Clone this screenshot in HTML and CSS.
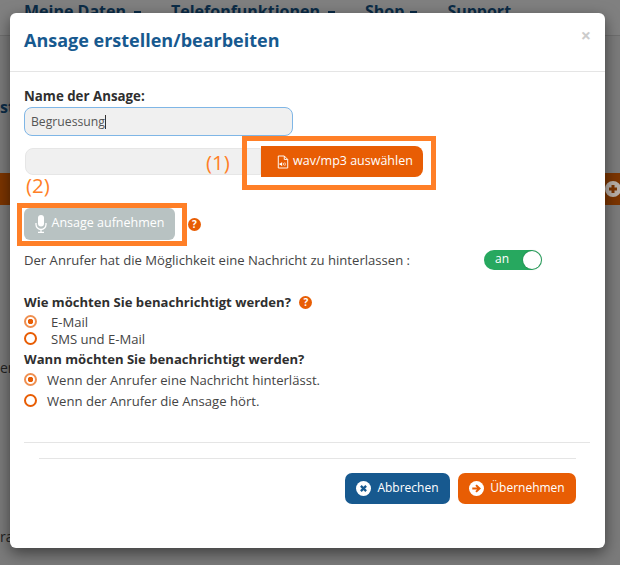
FILE: index.html
```html
<!DOCTYPE html>
<html lang="de">
<head>
    <meta charset="UTF-8">
    <meta name="viewport" content="width=device-width, initial-scale=1.0">
    <title>Ansage erstellen/bearbeiten</title>
    <link rel="stylesheet" href="styles.css">
</head>
<body>

<!-- Seite hinter dem Dialog -->
<nav class="topnav">
    <span class="nav-item drop">Meine Daten</span>
    <span class="nav-item drop">Telefonfunktionen</span>
    <span class="nav-item drop near">Shop</span>
    <span class="nav-item">Support</span>
</nav>
<span class="behind behind-st">st</span>
<span class="behind behind-en">en</span>
<span class="behind behind-ra">ra</span>
<div class="behind-bar behind-bar-left"></div>
<div class="behind-bar behind-bar-right">
    <svg class="behind-plus" viewBox="0 0 16 16"><circle cx="8" cy="8" r="8" fill="#b9b0a8"/><path d="M8 4v8M4 8h8" stroke="#7c3500" stroke-width="3"/></svg>
</div>

<div class="modal">
    <div class="modal-header">
        <h1>Ansage erstellen/bearbeiten</h1>
        <span class="close">×</span>
    </div>

    <div class="modal-body">
        <label class="field-label">Name der Ansage:</label>
        <div class="text-input">Begruessung<span class="caret"></span></div>

        <div class="file-row">
            <div class="file-path"></div>
            <button class="btn btn-file">
                <svg class="file-icon" viewBox="0 0 14 16">
                    <path d="M1.5 1h7l4 4v10h-11z" fill="none" stroke="#fff" stroke-width="1.1"/>
                    <path d="M8.5 1v4h4" fill="none" stroke="#fff" stroke-width="1.1"/>
                    <path d="M3 9.5h1.3l1.7-1.5v5l-1.7-1.5H3z" fill="#fff"/>
                    <path d="M7.3 9.3q.9 1.2 0 2.4M9 8.5q1.6 2 0 4" fill="none" stroke="#fff" stroke-width=".9"/>
                </svg>
                <span>wav/mp3 auswählen</span>
            </button>
        </div>

        <div class="record-row">
            <button class="btn btn-record">
                <svg class="mic-icon" viewBox="0 0 12 18">
                    <rect x="3" y="0" width="6" height="11.5" rx="3" fill="#fff"/>
                    <path d="M1 8v1.5a5 5 0 0 0 10 0V8M6 14.5V17M3 17.3h6" fill="none" stroke="#fff" stroke-width="1.3"/>
                </svg>
                <span>Ansage aufnehmen</span>
            </button>
            <span class="help">?</span>
        </div>

        <div class="toggle-row">
            <span>Der Anrufer hat die Möglichkeit eine Nachricht zu hinterlassen :</span>
            <div class="toggle"><span>an</span><i></i></div>
        </div>

        <div class="group-title first">Wie möchten Sie benachrichtigt werden? <span class="help">?</span></div>
        <div class="radio radio-tight wide"><i class="on"></i>E-Mail</div>
        <div class="radio radio-tight wide"><i></i>SMS und E-Mail</div>

        <div class="group-title second">Wann möchten Sie benachrichtigt werden?</div>
        <div class="radio"><i class="on"></i>Wenn der Anrufer eine Nachricht hinterlässt.</div>
        <div class="radio"><i></i>Wenn der Anrufer die Ansage hört.</div>
    </div>

    <div class="modal-footer">
        <div class="footer-inner">
            <button class="btn btn-blue">
                <svg class="round-icon" viewBox="0 0 16 16"><circle cx="8" cy="8" r="8" fill="#fff"/><path d="M5.2 5.2l5.6 5.6M10.8 5.2l-5.6 5.6" stroke="#17598f" stroke-width="2.4"/></svg>
                <span>Abbrechen</span>
            </button>
            <button class="btn btn-orange">
                <svg class="round-icon" viewBox="0 0 16 16"><circle cx="8" cy="8" r="8" fill="#fff"/><path d="M3.5 8h7M7.5 4.4L11.2 8l-3.7 3.6" fill="none" stroke="#e85d04" stroke-width="2.2"/></svg>
                <span>Übernehmen</span>
            </button>
        </div>
    </div>

    <!-- Markierungen aus dem Screenshot -->
    <div class="mark mark-file"></div>
    <div class="mark mark-record"></div>
    <span class="mark-num mark-num-1">(1)</span>
    <span class="mark-num mark-num-2">(2)</span>
</div>

</body>
</html>
```

FILE: styles.css
```css
* {
    box-sizing: border-box;
}
html, body {
    height: 100%;
}
body {
    font-family: "Open Sans", Arial, sans-serif;
    background-color: #7b7b7b;
    margin: 0;
    overflow: hidden;
    position: relative;
    color: #333;
}

/* page behind the dialog */
.topnav {
    height: 36px;
    background-color: #808080;
    border-bottom: 1px solid #6e6e6e;
    display: flex;
    gap: 30px;
    padding: 0 0 0 24px;
    font-size: 16px;
    font-weight: 700;
    color: #0b2c47;
    white-space: nowrap;
    overflow: hidden;
}
.nav-item.drop::after {
    content: "";
    display: inline-block;
    width: 7px;
    height: 2px;
    margin-left: 8px;
    vertical-align: 4px;
    background-color: #0b2c47;
}
.nav-item.near::after {
    margin-left: 6px;
}
.behind {
    position: absolute;
    font-size: 14px;
    color: #222;
}
.behind-st { left: 0; top: 96px; font-weight: 700; font-size: 16px; color: #0b2c47; }
.behind-en { left: 0; top: 358px; }
.behind-ra { left: 0; top: 527px; }
.behind-bar {
    position: absolute;
    top: 173px;
    height: 32px;
    background-color: #7c3500;
}
.behind-bar-left { left: 0; width: 12px; }
.behind-bar-right { left: 600px; width: 20px; }
.behind-plus {
    position: absolute;
    left: 5px;
    top: 8px;
    width: 16px;
    height: 16px;
}

/* dialog */
.modal {
    position: absolute;
    left: 10px;
    top: 13px;
    width: 595px;
    height: 535px;
    background-color: #fff;
    border-radius: 6px;
    box-shadow: 0 5px 15px rgba(0, 0, 0, 0.5);
}
.modal-header {
    height: 59px;
    border-bottom: 1px solid #e5e5e5;
    padding: 14px 14px 0;
    position: relative;
}
.modal-header h1 {
    margin: 0;
    font-size: 18px;
    line-height: 27px;
    font-weight: 700;
    color: #17598f;
}
.close {
    position: absolute;
    right: 14px;
    top: 10px;
    font-size: 18px;
    font-weight: 700;
    line-height: 24px;
    color: #ccc;
}
.modal-body {
    padding-top: 14px;
    height: 371px;
    border-bottom: 1px solid #e5e5e5;
    margin: 0 15px 0 14px;
    font-size: 13.1px;
}
.field-label {
    display: block;
    font-weight: 700;
    font-size: 13.3px;
    line-height: 20px;
    color: #2f2f2f;
}
.text-input {
    width: 269px;
    height: 29px;
    margin-top: 1px;
    padding-left: 6px;
    font-size: 12.2px;
    line-height: 27px;
    background-color: #f0f0f0;
    border: 1px solid #7fb6e6;
    border-radius: 8px;
    color: #555;
}
.caret {
    display: inline-block;
    width: 1px;
    height: 14px;
    background-color: #333;
    vertical-align: -3px;
}
.file-row {
    display: flex;
    align-items: center;
    margin-top: 10px;
    height: 31px;
}
.file-path {
    width: 236px;
    height: 27px;
    margin-left: 1px;
    background-color: #f0f0f0;
    border: 1px solid #e6e6e6;
    border-radius: 8px 0 0 8px;
}
.btn {
    display: inline-flex;
    align-items: center;
    justify-content: center;
    border: none;
    color: #fff;
    font-family: inherit;
    font-size: 12.5px;
    white-space: nowrap;
    padding: 0;
}
.btn span {
    margin-bottom: 3px;
}
.btn-file {
    width: 162px;
    height: 31px;
    gap: 4px;
    padding-left: 6px;
    background-color: #e85d04;
    border-radius: 0 8px 8px 0;
}
.file-icon {
    width: 12px;
    height: 14px;
}
.record-row {
    display: flex;
    align-items: center;
    gap: 13px;
    margin-top: 31px;
}
.btn-record {
    width: 151px;
    height: 32px;
    gap: 5px;
    background-color: #b8c2c2;
    border-radius: 6px;
}
.mic-icon {
    width: 12px;
    height: 18px;
}
.help {
    display: inline-block;
    width: 13px;
    height: 13px;
    border-radius: 50%;
    background-color: #e85d04;
    color: #fff;
    font-size: 10px;
    font-weight: 700;
    line-height: 13px;
    text-align: center;
    vertical-align: 1px;
}
.toggle-row {
    display: flex;
    align-items: center;
    justify-content: space-between;
    height: 20px;
    margin-top: 10px;
    padding-right: 48px;
    color: #444;
}
.toggle {
    position: relative;
    width: 58px;
    height: 20px;
    background-color: #27a85f;
    border-radius: 10px;
    color: #fff;
    font-size: 12px;
    line-height: 18px;
    padding-left: 11px;
}
.toggle i {
    position: absolute;
    right: 1px;
    top: 1px;
    width: 18px;
    height: 18px;
    border-radius: 50%;
    background-color: #fff;
    box-shadow: 0 0 2px rgba(0, 0, 0, 0.3);
}
.group-title {
    font-weight: 700;
    font-size: 13.1px;
    line-height: 20px;
    color: #2f2f2f;
}
.group-title.first {
    margin-top: 22px;
    margin-bottom: 1px;
}
.group-title.second {
    margin-top: 2px;
}
.group-title .help {
    margin-left: 5px;
}
.radio {
    display: flex;
    align-items: center;
    height: 21px;
    line-height: 16px;
    color: #444;
}
.radio-tight {
    height: 17px;
}
.radio i {
    width: 13px;
    height: 13px;
    margin-right: 10px;
    border: 2px solid #e85d04;
    border-radius: 50%;
    background-color: #fff;
    flex-shrink: 0;
}
.radio.wide i {
    margin-right: 14px;
}
.radio i.on {
    background: radial-gradient(circle, #e85d04 0 2.5px, #fff 3px);
    border-color: #ef8f50;
}
.modal-footer {
    padding: 0 29px;
}
.footer-inner {
    margin-top: 15px;
    border-top: 1px solid #e5e5e5;
    padding-top: 14px;
    display: flex;
    justify-content: flex-end;
    gap: 8px;
}
.btn-blue, .btn-orange {
    height: 31px;
    gap: 6px;
    font-size: 12px;
    border-radius: 7px;
}
.btn-blue {
    width: 105px;
    background-color: #17598f;
}
.btn-orange {
    width: 118px;
    background-color: #e85d04;
}
.round-icon {
    width: 15px;
    height: 15px;
}

/* orange annotations drawn over the screenshot */
.mark {
    position: absolute;
    border: 5px solid #ff7f27;
}
.mark-file {
    left: 232px;
    top: 123px;
    width: 194px;
    height: 54px;
}
.mark-record {
    left: 7px;
    top: 190px;
    width: 170px;
    height: 43px;
}
.mark-num {
    position: absolute;
    font-size: 20.5px;
    line-height: 24px;
    color: #ff7f27;
}
.mark-num-1 { left: 196px; top: 137px; }
.mark-num-2 { left: 16px; top: 160px; }
```
